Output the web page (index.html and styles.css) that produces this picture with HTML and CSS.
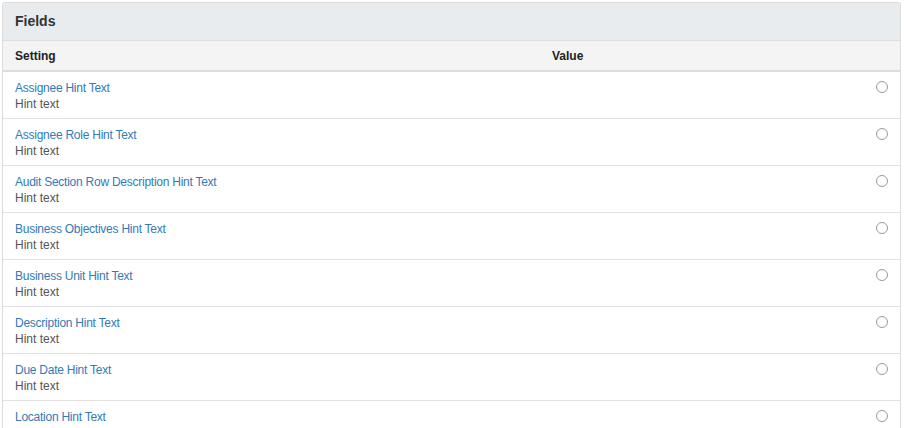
FILE: index.html
```html
<!DOCTYPE html>
<html>
<head>
<meta charset="utf-8">
<link rel="stylesheet" href="styles.css">
</head>
<body>
<div class="panel">
  <div class="panel-heading">Fields</div>
  <table class="grid">
    <thead>
      <tr><th class="c-setting">Setting</th><th class="c-value">Value</th><th class="c-radio"></th></tr>
    </thead>
    <tbody>
      <tr><td><a class="name" href="#">Assignee Hint Text</a><div class="hint">Hint text</div></td><td></td><td class="c-radio"><span class="radio"></span></td></tr>
      <tr><td><a class="name" href="#">Assignee Role Hint Text</a><div class="hint">Hint text</div></td><td></td><td class="c-radio"><span class="radio"></span></td></tr>
      <tr><td><a class="name" href="#">Audit Section Row Description Hint Text</a><div class="hint">Hint text</div></td><td></td><td class="c-radio"><span class="radio"></span></td></tr>
      <tr><td><a class="name" href="#">Business Objectives Hint Text</a><div class="hint">Hint text</div></td><td></td><td class="c-radio"><span class="radio"></span></td></tr>
      <tr><td><a class="name" href="#">Business Unit Hint Text</a><div class="hint">Hint text</div></td><td></td><td class="c-radio"><span class="radio"></span></td></tr>
      <tr><td><a class="name" href="#">Description Hint Text</a><div class="hint">Hint text</div></td><td></td><td class="c-radio"><span class="radio"></span></td></tr>
      <tr><td><a class="name" href="#">Due Date Hint Text</a><div class="hint">Hint text</div></td><td></td><td class="c-radio"><span class="radio"></span></td></tr>
      <tr><td><a class="name" href="#">Location Hint Text</a><div class="hint">Hint text</div></td><td></td><td class="c-radio"><span class="radio"></span></td></tr>
    </tbody>
  </table>
</div>
</body>
</html>
```
FILE: styles.css
```css
html, body {
  margin: 0;
  padding: 0;
  background: #fff;
}
body {
  padding: 2px 3px 0 2px;
  font-family: "Liberation Sans", Arial, sans-serif;
  font-size: 12px;
  color: #333;
  overflow: hidden;
}
.panel {
  border: 1px solid #dcdcdc;
  border-bottom: none;
  border-radius: 3px 3px 0 0;
  background: #fff;
}
.panel-heading {
  background: #e9ecef;
  border-bottom: 1px solid #dcdfe2;
  height: 37px;
  line-height: 37px;
  padding: 0 12px;
  font-size: 14px;
  font-weight: bold;
  color: #333;
  border-radius: 3px 3px 0 0;
}
.grid {
  width: 100%;
  border-collapse: collapse;
  table-layout: fixed;
}
.grid th {
  background: #f4f4f4;
  text-align: left;
  font-weight: bold;
  font-size: 12px;
  color: #222;
  height: 30px;
  padding: 0 12px;
  border-bottom: 2px solid #dddddd;
  box-sizing: border-box;
}
.c-setting { width: 537px; }
.c-radio { width: 36px; }
.grid td {
  padding: 8px 12px 5px;
  border-bottom: 1px solid #e2e2e2;
  vertical-align: top;
  height: 33px;
}
.grid td.c-radio {
  padding: 9px 12px 0 0;
  text-align: right;
}
.name {
  display: block;
  color: #337ab7;
  text-decoration: none;
  line-height: 16px;
  letter-spacing: -0.25px;
}
.hint {
  color: #555;
  line-height: 17px;
}
.radio {
  display: inline-block;
  width: 10px;
  height: 10px;
  border: 1px solid #9a9a9a;
  border-radius: 50%;
  background: #fff;
}
```
